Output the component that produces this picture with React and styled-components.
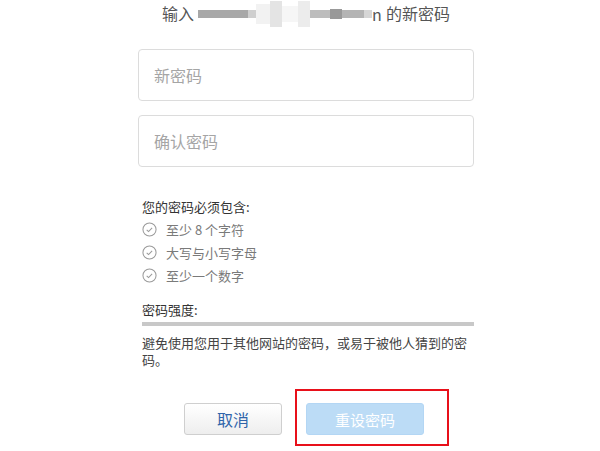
import React from "react";
import styled, { createGlobalStyle } from "styled-components";

/* 重设密码页 */

const GlobalStyle = createGlobalStyle`
  body {
    margin: 0;
    background: #fff;
    font-family: "Noto Sans CJK SC", "Liberation Sans", sans-serif;
  }
`;

const Page = styled.div`
  width: 336px;
  min-height: 451px;
  margin-left: 138px;
  display: flex;
  flex-direction: column;
`;

const Title = styled.h2`
  margin: 0;
  height: 28px;
  padding-bottom: 3px;
  box-sizing: border-box;
  display: flex;
  align-items: center;
  justify-content: center;
  gap: 4px;
  font-size: 16px;
  font-weight: normal;
  color: #555;
  white-space: nowrap;
`;

/* 打码的邮箱 */
const Mosaic = styled.span`
  display: inline-flex;
  align-items: center;
  height: 28px;
  margin-top: 3px;
`;

const Cell = styled.span`
  display: inline-block;
  width: ${(p) => p.$w}px;
  height: ${(p) => p.$h}px;
  background: ${(p) => p.$c};
`;

const Field = styled.input`
  box-sizing: border-box;
  width: 100%;
  height: 52px;
  margin-top: ${(p) => p.$top}px;
  padding: 0 15px;
  border: 1px solid #dcdcdc;
  border-radius: 4px;
  font-family: inherit;
  font-size: 16px;
  color: #333;
  outline: none;
  &::placeholder {
    color: #a5a5a5;
  }
`;

const Rules = styled.div`
  margin-top: 28px;
  padding-left: 4px;
  font-size: 13px;
  line-height: 23px;
`;

const RulesTitle = styled.div`
  color: #333;
`;

const Rule = styled.div`
  display: flex;
  align-items: center;
  gap: 9px;
  color: #7a7a7a;
`;

const Strength = styled.div`
  margin-top: 11px;
  padding-left: 4px;
  font-size: 13px;
  line-height: 23px;
  color: #333;
`;

const Bar = styled.div`
  height: 4px;
  margin: 1px 0 0 4px;
  background: #c8c8c8;
`;

const Hint = styled.p`
  margin: 8px 0 0 4px;
  font-size: 13px;
  line-height: 17px;
  color: #444;
`;

const Actions = styled.div`
  display: flex;
  justify-content: center;
  align-items: flex-start;
  gap: 24px;
  margin-top: 35px;
  padding-right: 4px;
`;

const Button = styled.button`
  height: 32px;
  margin: 0;
  border-radius: 3px;
  font-family: inherit;
  font-size: 16px;
  cursor: pointer;
`;

const CancelButton = styled(Button)`
  width: 98px;
  border: 1px solid #cfcfcf;
  background: linear-gradient(#ffffff, #eeeeee);
  color: #2f64aa;
`;

const Marked = styled.span`
  position: relative;
  display: inline-flex;
`;

/* 截图里的红色标注框 */
const RedMark = styled.span`
  position: absolute;
  left: -11px;
  top: -14px;
  width: 154px;
  height: 57px;
  box-sizing: border-box;
  border: 2px solid #e8101a;
  pointer-events: none;
`;

const SubmitButton = styled(Button)`
  width: 118px;
  border: 1px solid #b3d6f4;
  background: #bcdcf6;
  color: #fff;
  font-size: 15px;
`;

const CheckIcon = () => (
  <svg width="15" height="15" viewBox="0 0 16 16" fill="none" stroke="#9a9a9a" strokeWidth="1.1">
    <circle cx="8" cy="8" r="7" />
    <path d="M5 8.3l2 1.9 3.8-3.9" />
  </svg>
);

const mosaic = [
  { w: 50, h: 8, c: "#a8a8a8" },
  { w: 8, h: 8, c: "#cfcfcf" },
  { w: 14, h: 20, c: "#f2f2f2" },
  { w: 12, h: 26, c: "#e4e4e4" },
  { w: 16, h: 16, c: "#f6f6f6" },
  { w: 12, h: 26, c: "#ececec" },
  { w: 20, h: 8, c: "#bdbdbd" },
  { w: 12, h: 10, c: "#999" },
  { w: 22, h: 8, c: "#b4b4b4" },
  { w: 8, h: 8, c: "#d6d6d6" },
];

const rules = ["至少 8 个字符", "大写与小写字母", "至少一个数字"];

const App = () => {
  return (
    <>
      <GlobalStyle />
      <Page>
        <Title>
          <span>输入</span>
          <Mosaic>
            {mosaic.map((m, i) => (
              <Cell key={i} $w={m.w} $h={m.h} $c={m.c} />
            ))}
            <span>n</span>
          </Mosaic>
          <span>的新密码</span>
        </Title>
        <Field $top={21} type="password" placeholder="新密码" />
        <Field $top={14} type="password" placeholder="确认密码" />
        <Rules>
          <RulesTitle>您的密码必须包含:</RulesTitle>
          {rules.map((r) => (
            <Rule key={r}>
              <CheckIcon />
              {r}
            </Rule>
          ))}
        </Rules>
        <Strength>密码强度:</Strength>
        <Bar />
        <Hint>避免使用您用于其他网站的密码，或易于被他人猜到的密码。</Hint>
        <Actions>
          <CancelButton>取消</CancelButton>
          <Marked>
            <RedMark />
            <SubmitButton disabled>重设密码</SubmitButton>
          </Marked>
        </Actions>
      </Page>
    </>
  );
};

export default App;
